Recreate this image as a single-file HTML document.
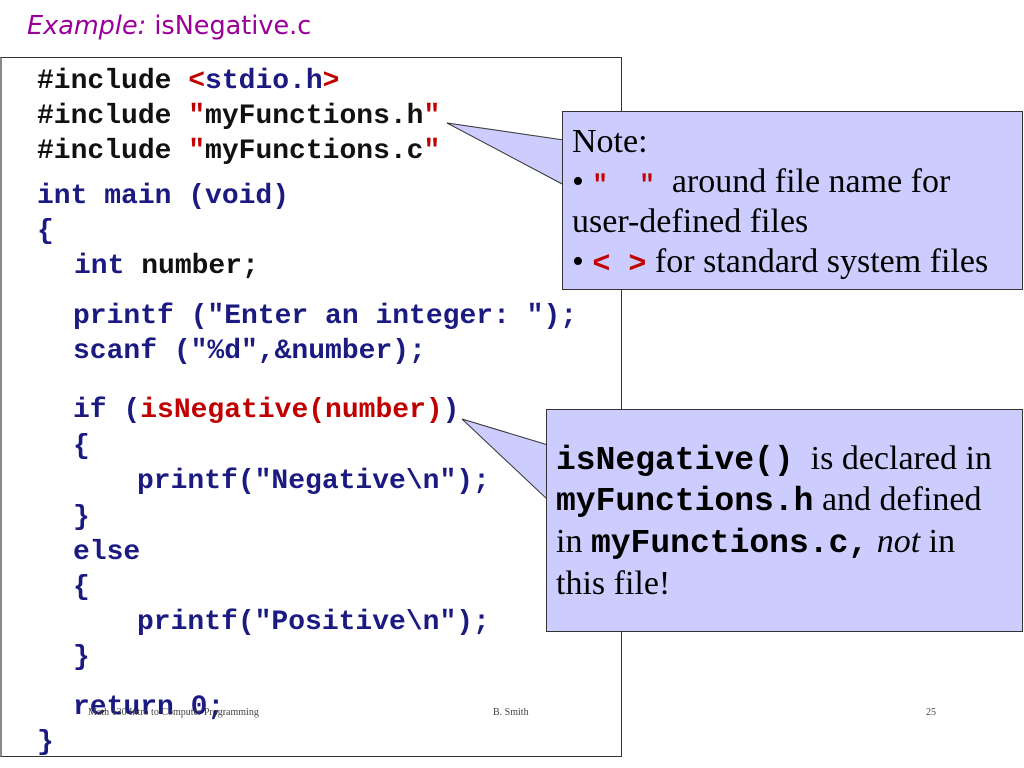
<!DOCTYPE html>
<html><head><meta charset="utf-8"><style>
html,body{margin:0;padding:0;background:#fff;width:1024px;height:768px;overflow:hidden;position:relative}
.t{position:absolute;left:27px;top:11px;font:25.5px "DejaVu Sans",sans-serif;color:#990099;white-space:nowrap}
.box{position:absolute;left:0;top:57px;width:622px;height:700px;border:1px solid #333;border-left:2px solid #888;box-sizing:border-box}
.c{position:absolute;font:bold 28px/35px "Liberation Mono",monospace;color:#1a1a80;white-space:pre}
.k{color:#111}.r{color:#c00000}
.co{position:absolute;background:#ccccff;border:1px solid #333;box-sizing:border-box}
.l{position:absolute;font:34px/40px "Liberation Serif",serif;color:#000;white-space:nowrap}
.m{font-family:"Liberation Mono",monospace;font-weight:bold}
.f{position:absolute;font:10px "Liberation Serif",serif;color:#444;white-space:nowrap}
</style></head><body>
<div class="t"><i>Example:</i> isNegative.c</div>
<div class="box"></div>
<div class="c" style="left:37px;top:64px"><span class="k">#include</span> <span class="r">&lt;</span>stdio.h<span class="r">&gt;</span></div>
<div class="c k" style="left:37px;top:99px">#include <span class="r">"</span>myFunctions.h<span class="r">"</span></div>
<div class="c k" style="left:37px;top:134px">#include <span class="r">"</span>myFunctions.c<span class="r">"</span></div>
<div class="c" style="left:37px;top:179px">int main (void)</div>
<div class="c" style="left:37px;top:214px">{</div>
<div class="c" style="left:74px;top:249px">int <span class="k">number;</span></div>
<div class="c" style="left:73px;top:299px">printf ("Enter an integer: ");</div>
<div class="c" style="left:73px;top:334px">scanf ("%d",&amp;number);</div>
<div class="c" style="left:73px;top:393px">if (<span class="r">isNegative(number)</span>)</div>
<div class="c" style="left:73px;top:429px">{</div>
<div class="c" style="left:137px;top:464px">printf("Negative\n");</div>
<div class="c" style="left:73px;top:500px">}</div>
<div class="c" style="left:73px;top:535px">else</div>
<div class="c" style="left:73px;top:570px">{</div>
<div class="c" style="left:137px;top:605px">printf("Positive\n");</div>
<div class="c" style="left:73px;top:640px">}</div>
<div class="c" style="left:73px;top:690px">return 0;</div>
<div class="c" style="left:37px;top:725px">}</div>
<div class="f" style="left:88px;top:707px">Math 130 Intro to Computer Programming</div>
<div class="f" style="left:493px;top:707px">B. Smith</div>
<div class="f" style="left:926px;top:707px">25</div>

<svg style="position:absolute;left:0;top:0" width="1024" height="768">
<polygon points="447,123 564,140 564,185" fill="#ccccff" stroke="#333" stroke-width="1"/>
<polygon points="462,419 548,445 548,500" fill="#ccccff" stroke="#333" stroke-width="1"/>
</svg>
<div class="co" style="left:562px;top:111px;width:461px;height:179px"></div>
<div class="l" style="left:572px;top:122px">Note:</div>
<div class="l" style="left:572px;top:162px">• <span class="r m" style="font-size:26px">"&nbsp;&nbsp;"</span>&nbsp; around file name for</div>
<div class="l" style="left:572px;top:202px">user-defined files</div>
<div class="l" style="left:572px;top:242px">• <span class="r m" style="font-size:30px">&lt; &gt;</span> for standard system files</div>
<div class="co" style="left:546px;top:409px;width:477px;height:223px"></div>
<div class="l" style="left:556px;top:439px"><span class="m" style="font-size:33px">isNegative()</span> &nbsp;is declared in</div>
<div class="l" style="left:556px;top:480px"><span class="m" style="font-size:33px">myFunctions.h</span> and defined</div>
<div class="l" style="left:556px;top:522px">in <span class="m" style="font-size:33px">myFunctions.c,</span> <i>not</i> in</div>
<div class="l" style="left:556px;top:564px">this file!</div>
</body></html>
